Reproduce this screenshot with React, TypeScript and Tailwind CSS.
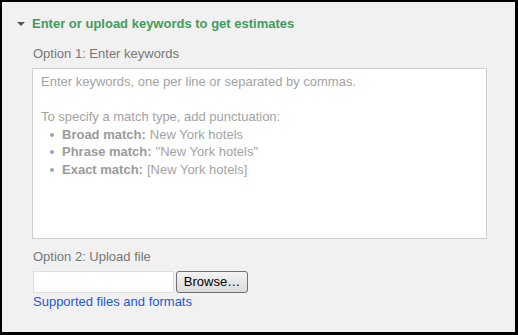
import React from "react";

const matchTypes = [
  { label: "Broad match:", example: "New York hotels" },
  { label: "Phrase match:", example: '"New York hotels"' },
  { label: "Exact match:", example: "[New York hotels]" },
];

const App: React.FC = () => {
  return (
    <div className="w-[518px] h-[335px] border-t-2 border-l-2 border-r-[3px] border-b-[3px] border-black bg-[#f1f1f1] font-['Liberation_Sans',Arial,sans-serif] text-[13px]">
      {/* Section header */}
      <div className="flex items-center pl-[15px] pt-[14px] leading-4">
        <svg width="8" height="4" viewBox="0 0 8 4" className="mr-[7px]">
          <polygon points="0,0 8,0 4,4" fill="#555" />
        </svg>
        <span className="font-bold text-[#3f9d5a]">Enter or upload keywords to get estimates</span>
      </div>

      <div className="pl-[30px] pr-[28px]">
        {/* Option 1 */}
        <p className="mt-[14px] leading-4 text-[#777] pl-px">Option 1: Enter keywords</p>
        <div className="mt-[6px] h-[171px] border border-[#cfcfcf] bg-white pl-2 pt-1 text-[#a3a3a3] leading-[17.6px]">
          <p>Enter keywords, one per line or separated by commas.</p>
          <p className="mt-[17.6px]">To specify a match type, add punctuation:</p>
          <ul className="pl-[9px]">
            {matchTypes.map((m) => (
              <li key={m.label} className="flex items-center">
                <span className="w-[4px] h-[4px] rounded-full bg-[#a3a3a3] mr-[8px]" />
                <span className="font-bold text-[#9a9a9a] mr-1">{m.label}</span>
                <span>{m.example}</span>
              </li>
            ))}
          </ul>
        </div>

        {/* Option 2 */}
        <p className="mt-[10px] leading-4 text-[#777] pl-px">Option 2: Upload file</p>
        <div className="mt-[6px] flex h-[22px] pl-px">
          <div className="w-[141px] h-full border border-[#dedede] bg-white" />
          <button className="ml-[2px] w-[72px] h-full rounded-[3px] border border-[#707070] bg-gradient-to-b from-[#f3f3f3] to-[#dadada] text-black leading-4">
            Browse…
          </button>
        </div>
        <a href="#" className="mt-px block leading-4 text-[#2357d6] pl-px">
          Supported files and formats
        </a>
      </div>
    </div>
  );
};

export default App;
